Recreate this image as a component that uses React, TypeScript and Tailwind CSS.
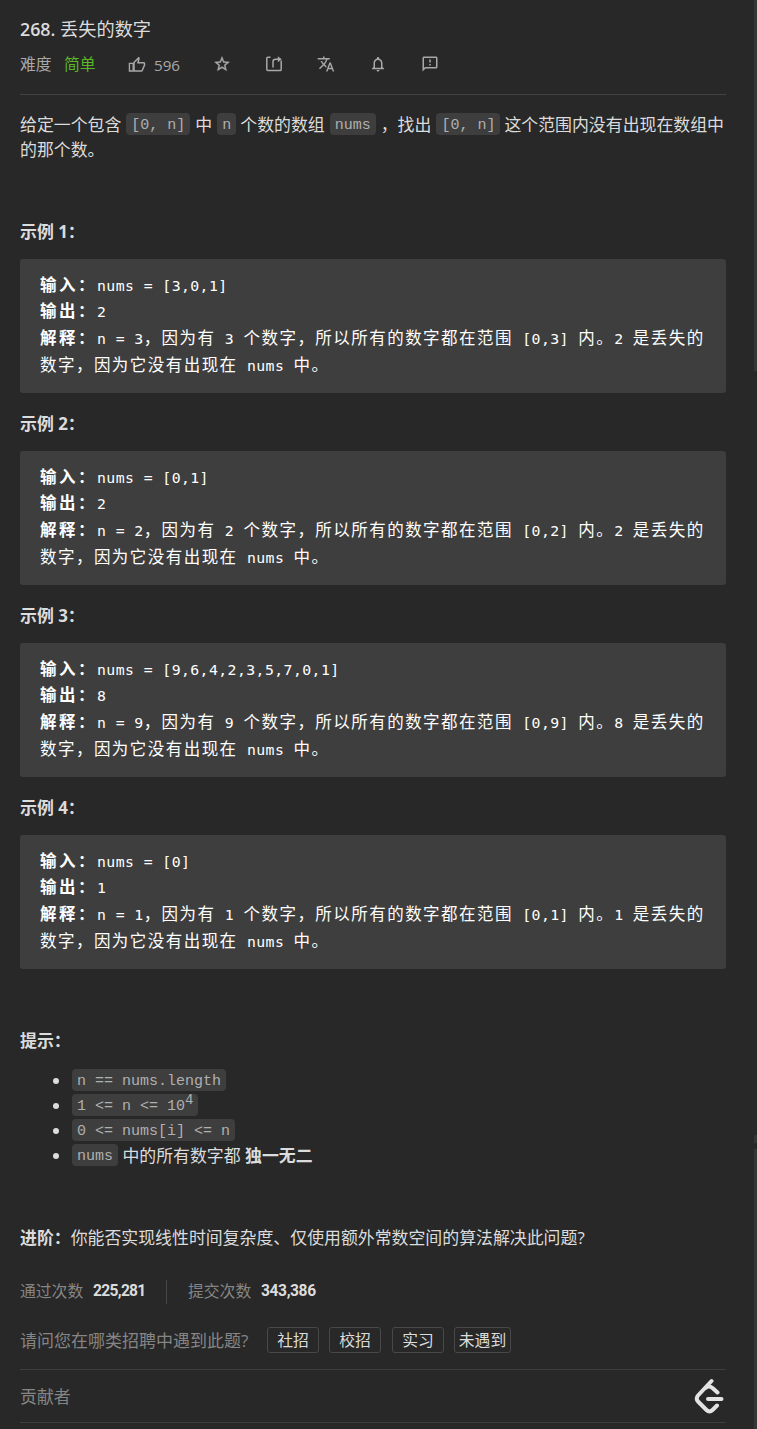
import type { ReactNode } from "react";

const examples = [
  { input: "nums = [3,0,1]", output: "2", n: 3 },
  { input: "nums = [0,1]", output: "2", n: 2 },
  { input: "nums = [9,6,4,2,3,5,7,0,1]", output: "8", n: 9 },
  { input: "nums = [0]", output: "1", n: 1 },
];

const jobTypes = ["社招", "校招", "实习", "未遇到"];

function Code({ children }: { children: ReactNode }) {
  return (
    <code className="mt-px inline-block h-[22px] rounded-[4px] bg-[#3e3e3e] px-[5px] align-top font-['Liberation_Mono',monospace] text-[15px] leading-[26px] text-[#b0b0b0]">
      {children}
    </code>
  );
}

// Latin and Chinese runs sit on different advances inside a sample block
function Mixed({ text }: { text: string }) {
  const runs = text.match(/[\u3000-\u9fff\uff00-\uffef]+|[^\u3000-\u9fff\uff00-\uffef]+/g) ?? [];
  return (
    <>
      {runs.map((run, i) =>
        /[\u3000-\u9fff\uff00-\uffef]/.test(run) ? (
          <span key={i} className="text-[16.5px] tracking-[1.46px]">
            {run}
          </span>
        ) : (
          <span key={i} className="text-[14.8px] tracking-[0.42px]">
            {run}
          </span>
        )
      )}
    </>
  );
}

function Label({ children }: { children: ReactNode }) {
  return <b className="text-[16.5px] tracking-[2.5px]">{children}</b>;
}

function Example({ index, input, output, n }: { index: number; input: string; output: string; n: number }) {
  return (
    <section className="h-[192px]">
      <h3 className="h-[39px] font-bold leading-[23px]">示例 {index}：</h3>
      <pre className="h-[134px] rounded-[3px] bg-[#3e3e3e] px-5 pt-[12.5px] font-['DejaVu_Sans_Mono','Noto_Sans_CJK_SC',monospace] text-white">
        <div className="h-[26.75px] leading-[26.75px]">
          <Label>输入：</Label>
          <Mixed text={input} />
        </div>
        <div className="h-[26.75px] leading-[26.75px]">
          <Label>输出：</Label>
          <Mixed text={output} />
        </div>
        <div className="h-[26.75px] leading-[26.75px]">
          <Label>解释：</Label>
          <Mixed text={`n = ${n}，因为有 ${n} 个数字，所以所有的数字都在范围 [0,${n}] 内。${output} 是丢失的`} />
        </div>
        <div className="h-[26.75px] leading-[26.75px]">
          <Mixed text="数字，因为它没有出现在 nums 中。" />
        </div>
      </pre>
    </section>
  );
}

function Toolbar() {
  return (
    <div className="flex h-[26px] items-center text-[15.8px] text-[#a8a8a8]">
      <span className="w-8">难度</span>
      <span className="ml-[12px] w-8 text-[#5ab726]">简单</span>
      <svg className="mb-px ml-[32px] size-[18px]" viewBox="0 0 24 24" fill="currentColor">
        <path d="M9 21h9c.83 0 1.54-.5 1.84-1.22l3.02-7.05c.09-.23.14-.47.14-.73v-2c0-1.1-.9-2-2-2h-6.31l.95-4.57.03-.32c0-.41-.17-.79-.44-1.06L14.17 1 7.58 7.59C7.22 7.95 7 8.45 7 9v10c0 1.1.9 2 2 2zM9 9l4.34-4.34L12 10h9v2l-3 7H9V9z" />
        <path d="M1.900 9.900h5v10.100h-5z" fill="none" stroke="currentColor" strokeWidth="1.800" />
      </svg>
      <span className="ml-2 w-[26px] text-[15.2px]">596</span>
      <svg className="mb-0.5 ml-[33px] size-[18px]" viewBox="0 0 24 24" fill="currentColor">
        <path
          d="M22 9.24l-7.19-.62L12 2 9.19 8.63 2 9.24l5.46 4.73L5.82 21 12 17.27 18.18 21l-1.63-7.03L22 9.24zM12 15.4l-3.76 2.27 1-4.28-3.32-2.88 4.38-.38L12 6.1l1.71 4.04 4.38.38-3.32 2.88 1 4.28L12 15.4z"
          stroke="currentColor"
          strokeWidth=".5"
        />
      </svg>
      <svg className="mb-0.5 ml-[34px] size-[18px]" viewBox="0 0 18 18" fill="none" stroke="currentColor" strokeWidth="1.500">
        <path d="M5.500 2.300H2.800a1 1 0 0 0-1 1v11.200a1 1 0 0 0 1 1h12.400a1 1 0 0 0 1-1V5.500M8 12.500V6.800a2.500 2.500 0 0 1 2.500-2.500h5" />
        <path d="M12.800 1.300l3.900 3-3.900 3z" fill="currentColor" stroke="none" />
      </svg>
      <svg className="mb-0.5 ml-[34px] size-[18px]" viewBox="0 0 24 24" fill="currentColor">
        <path d="M12.87 15.07l-2.54-2.51.03-.03c1.74-1.94 2.98-4.17 3.71-6.53H17V4h-7V2H8v2H1v1.99h11.17C11.5 7.92 10.44 9.75 9 11.35 8.07 10.32 7.3 9.19 6.69 8h-2c.73 1.63 1.73 3.17 2.98 4.56l-5.09 5.02L4 19l5-5 3.11 3.11.76-2.04zM18.5 10h-2L12 22h2l1.12-3h4.75L21 22h2l-4.500-12zm-2.620 7l1.620-4.330L19.120 17h-3.240z" />
      </svg>
      <svg className="mb-0.5 ml-[34px] size-[18px]" viewBox="0 0 24 24" fill="currentColor">
        <path d="M12 22c1.100 0 2-.9 2-2h-4c0 1.100.9 2 2 2zm6-6v-5c0-3.070-1.630-5.640-4.500-6.320V4c0-.83-.67-1.500-1.500-1.500s-1.500.67-1.500 1.500v.68C7.640 5.360 6 7.920 6 11v5l-2 2v1h16v-1l-2-2zm-2 1H8v-6c0-2.480 1.510-4.500 4-4.500s4 2.020 4 4.500v6z" />
      </svg>
      <svg className="mb-0.5 ml-[34px] size-[18px]" viewBox="0 0 24 24" fill="currentColor">
        <path d="M20 2H4c-1.100 0-1.990.9-1.990 2L2 22l4-4h14c1.100 0 2-.9 2-2V4c0-1.100-.9-2-2-2zm0 14H5.170L4 17.170V4h16v12zM11 12h2v2h-2zm0-6h2v4h-2z" />
      </svg>
    </div>
  );
}

export default function App() {
  return (
    <div className="flex h-[1429px] w-[757px] justify-between overflow-hidden bg-[#282828] font-['Open_Sans','Noto_Sans_CJK_SC',sans-serif] text-[16.9px] text-[#dcdcdc]">
      <main className="ml-5 w-[706px] whitespace-nowrap">
        <h1 className="mt-[14px] h-[31px] text-[18.2px] leading-[30px]">
          <span className="text-[17.8px] font-semibold">268.</span> 丢失的数字
        </h1>
        <div className="mt-[7px] h-[43px] border-b border-[#424242]">
          <Toolbar />
        </div>

        <div className="mt-[17px] h-[108px] leading-[25px]">
          <p className="flex">
            给定一个包含
            <span className="ml-[5px] mr-[5px]"><Code><span className="whitespace-pre">[0, n]</span></Code></span>
            中
            <span className="mx-[5px]"><Code>n</Code></span>
            <span className="-ml-px">个数的数组</span>
            <span className="mx-[5px]"><Code>nums</Code></span>
            ，找出
            <span className="ml-[5px] mr-[4px]"><Code><span className="whitespace-pre">[0, n]</span></Code></span>
            这个范围内没有出现在数组中
          </p>
          <p>的那个数。</p>
        </div>

        {examples.map((ex, i) => (
          <Example key={i} index={i + 1} {...ex} />
        ))}

        <h3 className="mt-[40px] font-bold leading-[25px]">提示：</h3>
        <ul className="mt-[15px] ml-[52px] list-outside list-disc leading-[25px]">
          <li className="h-[25px]"><Code>n == nums.length</Code></li>
          <li className="h-[25px]">
            <Code>
              1 &lt;= n &lt;= 10<sup className="top-[-6px] text-[14px] leading-none">4</sup>
            </Code>
          </li>
          <li className="h-[25px]"><Code>0 &lt;= nums[i] &lt;= n</Code></li>
          <li className="h-[25px]"><Code>nums</Code> 中的所有数字都 <b>独一无二</b></li>
        </ul>

        <p className="mt-[57px] leading-[25px]">
          <b>进阶：</b>你能否实现线性时间复杂度、仅使用额外常数空间的算法解决此问题?
        </p>

        <div className="mt-[30px] flex h-6 items-center text-[15.8px] text-[#858585]">
          <span className="w-[63px]">通过次数</span>
          <b className="ml-[10px] w-[53px] font-['Roboto',sans-serif] text-[15.6px] tracking-[-0.7px] text-[#dcdcdc]">225,281</b>
          <span className="ml-5 mr-[21px] h-6 w-px bg-[#484848]" />
          <span className="w-[63px]">提交次数</span>
          <b className="ml-[10px] font-['Roboto',sans-serif] text-[15.6px] tracking-[-0.4px] text-[#dcdcdc]">343,386</b>
        </div>

        <div className="mt-[23px] flex h-[26px] items-center gap-[10px] text-[15.8px]">
          <span className="w-[237px] pt-[2px] text-[17px] text-[#858585]">请问您在哪类招聘中遇到此题?</span>
          {jobTypes.map((type) => (
            <button
              key={type}
              className={`flex h-[26px] items-center justify-center rounded-[3px] border border-[#484848] pt-px ${
                type === "未遇到" ? "w-[57px]" : type === "校招" ? "mr-[1px] w-[52px]" : "w-[52px]"
              }`}
            >
              {type}
            </button>
          ))}
        </div>

        <footer className="mt-4 flex h-[54px] items-center justify-between border-y border-[#3e3e3e] text-[#858585]">
          <span className="pt-[2px]">贡献者</span>
          <svg className="h-[36px] w-[32px]" viewBox="0 0 32 36" fill="none" stroke="#e3e3e3" strokeWidth="4" strokeLinecap="round" strokeLinejoin="round">
            <path d="M17.500 3L4 17.500Q1.500 20.500 4 23.500l8.500 8.500Q15.500 35 18.500 32L23 27.500M11.500 10Q15 7 18.500 10l5 4.500M14 21h13.500" />
          </svg>
        </footer>
      </main>

      <aside className="flex w-[3px] flex-col">
        <div className="h-[371px] bg-[#363636]" />
        <div className="mt-[764px] h-[8px] bg-[#363636]" />
        <div className="mt-[6px] flex-1 bg-[#363636]" />
      </aside>
    </div>
  );
}
